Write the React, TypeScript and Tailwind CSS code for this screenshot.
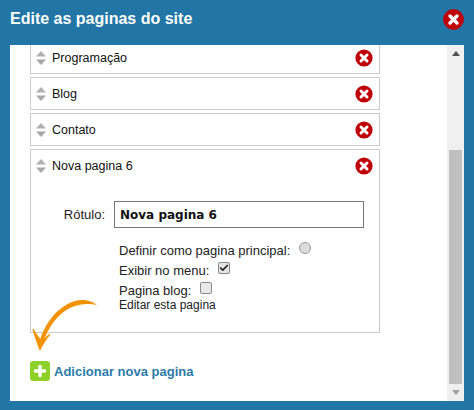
import { Check, Plus } from "lucide-react";

const sans = "font-['Liberation_Sans',Arial,sans-serif]";

function DeleteIcon({ size = 18 }: { size?: number }) {
  return (
    <svg width={size} height={size} viewBox="0 0 18 18" className="shrink-0">
      <circle cx="9" cy="9" r="8.6" fill="#c00008" />
      <path d="M6 6l6 6M12 6l-6 6" stroke="#fff" strokeWidth="3" strokeLinecap="round" />
    </svg>
  );
}

function SortIcon() {
  return (
    <svg width="12" height="14" viewBox="0 0 12 14" className="shrink-0">
      <path d="M6 0l5 5.5H1z" fill="#b0b0b0" />
      <path d="M1 8.5h10L6 14z" fill="#a8a8a8" />
    </svg>
  );
}

function PageHeader({ title }: { title: string }) {
  return (
    <div className="flex h-[31px] items-center pl-[4px] pr-[6px]">
      <SortIcon />
      <span className="ml-[5px] flex-1 pt-[2px] text-[12.5px] text-[#111]">{title}</span>
      <DeleteIcon />
    </div>
  );
}

function PageRow({ title }: { title: string }) {
  return (
    <div className="h-[33px] w-[350px] border border-[#ccc]">
      <PageHeader title={title} />
    </div>
  );
}

export default function App() {
  return (
    <div className={`h-[410px] w-[474px] overflow-hidden bg-[#2176a5] ${sans}`}>
      {/* Header */}
      <div className="flex h-[45px] items-start justify-between pl-[10px] pr-[10px] pt-[9px]">
        <h1 className="text-[16px] leading-[19px] font-bold text-white">Edite as paginas do site</h1>
        <svg width="21" height="21" viewBox="0 0 21 21" className="shrink-0">
          <circle cx="10.5" cy="10.5" r="10.4" fill="#c00008" />
          <path d="M7 7l7 7M14 7l-7 7" stroke="#fff" strokeWidth="3.4" strokeLinecap="round" />
        </svg>
      </div>

      {/* Panel */}
      <div className="mx-[10px] flex h-[356px] w-[454px] overflow-hidden bg-white">
        <div className="flex-1 pl-[20px]">
          <div className="-mt-[4px] flex flex-col gap-[3px]">
            <PageRow title="Programação" />
            <PageRow title="Blog" />
            <PageRow title="Contato" />
            <div className="h-[184px] w-[350px] border border-[#ccc]">
              <PageHeader title="Nova pagina 6" />
              <div className="mt-[20px] flex items-center">
                <label className="w-[83px] pr-[9px] text-right text-[13px] text-[#222]">Rótulo:</label>
                <input
                  readOnly
                  value="Nova pagina 6"
                  className="h-[27px] w-[250px] border border-[#767676] px-[5px] font-['DejaVu_Sans',Verdana,sans-serif] text-[12px] font-bold text-[#111] outline-none"
                />
              </div>
              <div className="mt-[13px] ml-[88px] flex flex-col text-[13px] leading-[14px] text-[#222]">
                <div className="flex h-[20px] items-center">
                  <span>Definir como pagina principal:</span>
                  <span className="mb-[6px] ml-[9px] h-[12px] w-[12px] rounded-full border border-[#9a9a9a] bg-[#dcdcdc]" />
                </div>
                <div className="flex h-[20px] items-center">
                  <span>Exibir no menu:</span>
                  <span className="mb-[6px] ml-[9px] flex h-[12px] w-[12px] items-center justify-center rounded-[2px] border border-[#8a8a8a] bg-[#e4e4e4]">
                    <Check size={10} strokeWidth={4} color="#222" />
                  </span>
                </div>
                <div className="flex h-[20px] items-center">
                  <span>Pagina blog:</span>
                  <span className="mb-[6px] ml-[9px] h-[12px] w-[12px] rounded-[2px] border border-[#8a8a8a] bg-[#e8e8e8]" />
                </div>
                <span className="-mt-[3px] text-[12px]">Editar esta pagina</span>
              </div>
            </div>
          </div>

          {/* Add page */}
          <div className="mt-[28px] flex items-center gap-[4px]">
            <span className="flex h-[20px] w-[20px] items-center justify-center rounded-[3px] bg-[#8ed02c]">
              <Plus size={16} strokeWidth={5} color="#fff" />
            </span>
            <span className="pt-[1px] text-[13px] font-bold text-[#2b7ba8]">Adicionar nova pagina</span>
          </div>
        </div>

        {/* Scrollbar */}
        <div className="flex w-[17px] shrink-0 flex-col items-center bg-[#f0f0f0]">
          <svg width="8" height="5" viewBox="0 0 8 5" className="mt-[6px]">
            <path d="M4 0l4 5H0z" fill="#505050" />
          </svg>
          <div className="mt-[94px] h-[234px] w-[13px] bg-[#c0c0c0]" />
          <svg width="8" height="5" viewBox="0 0 8 5" className="mt-[6px]">
            <path d="M0 0h8L4 5z" fill="#a0a0a0" />
          </svg>
        </div>
      </div>

      {/* Arrow over the list */}
      <svg width="70" height="62" viewBox="0 0 70 62" className="absolute left-[30px] top-[297px]">
        <path d="M67 8C58 1 46 2 36 8C24 15 14 28 9 46L13 46C18 30 28 17 40 11C48 7 58 6 67 8Z" fill="#f39200" />
        <path d="M3 32C5 40 8 48 10 53C12 48 16 43 20 37C17 39 14 42 12 45C9 41 6 37 3 32Z" fill="#f39200" stroke="#f39200" strokeWidth="1" strokeLinejoin="round" />
      </svg>
    </div>
  );
}
